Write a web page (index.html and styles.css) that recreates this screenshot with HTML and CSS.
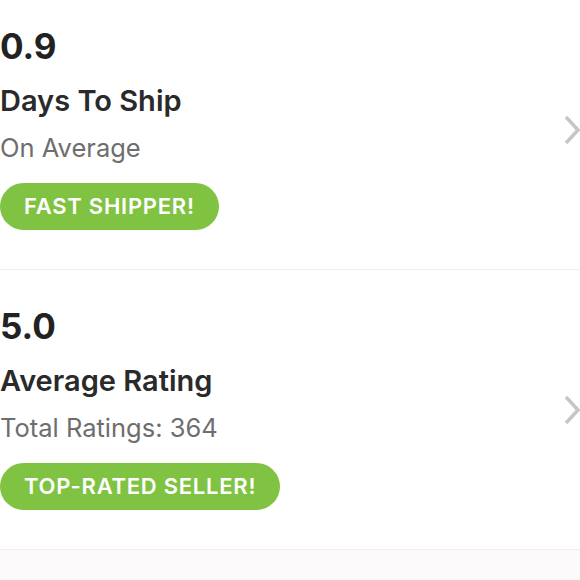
FILE: index.html
```html
<!DOCTYPE html>
<html>
<head>
<meta charset="utf-8">
<link rel="stylesheet" href="styles.css">
</head>
<body>
<div class="list">
  <div class="row">
    <div class="info">
      <div class="value">0.9</div>
      <div class="title">Days To Ship</div>
      <div class="sub">On Average</div>
      <div class="badge">FAST SHIPPER!</div>
    </div>
    <svg class="chev" width="18" height="32" viewBox="0 0 18 32"><path d="M3 3 L15 16 L3 29" fill="none" stroke="#c6c6c6" stroke-width="3.5"/></svg>
  </div>
  <div class="row">
    <div class="info">
      <div class="value">5.0</div>
      <div class="title">Average Rating</div>
      <div class="sub">Total Ratings: 364</div>
      <div class="badge">TOP-RATED SELLER!</div>
    </div>
    <svg class="chev" width="18" height="32" viewBox="0 0 18 32"><path d="M3 3 L15 16 L3 29" fill="none" stroke="#c6c6c6" stroke-width="3.5"/></svg>
  </div>
</div>
</body>
</html>
```
FILE: styles.css
```css
html, body {
  margin: 0;
  padding: 0;
  background: #fcfafa;
  font-family: "Inter", "Liberation Sans", sans-serif;
}
.list {
  background: #ffffff;
  width: 580px;
  margin-top: -10px;
}
.row {
  display: flex;
  align-items: center;
  justify-content: space-between;
  height: 280px;
  border-bottom: 1px solid #efefef;
  box-sizing: border-box;
}
.info {
  display: flex;
  flex-direction: column;
  align-items: flex-start;
  align-self: flex-start;
  padding-top: 34px;
}
.value {
  font-size: 35px;
  font-weight: 700;
  color: #222222;
  line-height: 44px;
}
.title {
  font-size: 29px;
  font-weight: 600;
  color: #2a2a2a;
  line-height: 34px;
  margin-top: 16px;
}
.sub {
  font-size: 25.5px;
  font-weight: 400;
  color: #6e6e6e;
  line-height: 32px;
  margin-top: 14px;
}
.badge {
  margin-top: 19px;
  height: 47px;
  line-height: 47px;
  padding: 0 24px;
  border-radius: 24px;
  background: #80c342;
  color: #ffffff;
  font-size: 22px;
  font-weight: 600;
  letter-spacing: 0.75px;
}
.chev {
  margin-right: -1px;
}
```
